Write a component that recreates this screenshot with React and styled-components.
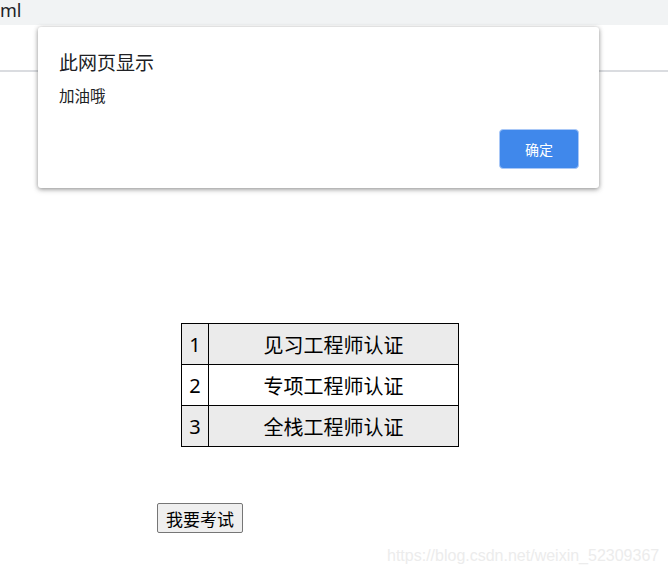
import React from 'react';
import styled, { createGlobalStyle } from 'styled-components';

const GlobalStyle = createGlobalStyle`
  html, body {
    margin: 0;
    padding: 0;
    background: #ffffff;
    font-family: 'Noto Sans', 'Noto Sans CJK SC', sans-serif;
    color: #000;
  }
`;

const Page = styled.div`
  position: relative;
  width: 668px;
  height: 576px;
  overflow: hidden;
`;

const AddressBar = styled.div`
  height: 25px;
  background: #f1f3f4;
  font-size: 18px;
  line-height: 20px;
  color: #202124;
`;

const TabStrip = styled.div`
  height: 45px;
  border-bottom: 2px solid #dadce0;
`;

const Content = styled.div`
  padding-top: 251px;
`;

const Table = styled.table`
  margin-left: 181px;
  border-collapse: collapse;
  font-family: 'Noto Sans', 'Noto Sans CJK SC', sans-serif;
  font-size: 20px;
`;

const Row = styled.tr`
  height: 41px;
  background: ${p => (p.$shaded ? '#ebebeb' : '#ffffff')};
`;

const Cell = styled.td`
  border: 1px solid #000;
  text-align: center;
  padding: 0;
  width: ${p => p.$w}px;
`;

const ExamButton = styled.button`
  margin: 56px 0 0 157px;
  width: 86px;
  height: 30px;
  font-family: 'Noto Sans CJK SC', sans-serif;
  font-size: 17px;
  background: #efefef;
  border: 1px solid #767676;
  border-radius: 2px;
  padding: 0;
  color: #000;
`;

const Watermark = styled.div`
  position: absolute;
  left: 387px;
  top: 547px;
  font-family: 'Liberation Sans', Arial, sans-serif;
  font-size: 16px;
  color: #ececec;
`;

const Dialog = styled.div`
  position: absolute;
  left: 38px;
  top: 27px;
  width: 561px;
  height: 161px;
  box-sizing: border-box;
  background: #fff;
  border-radius: 3px;
  box-shadow: 0 1px 4px rgba(0, 0, 0, 0.35), 0 2px 6px rgba(0, 0, 0, 0.15);
  padding: 22px 20px 19px 21px;
  display: flex;
  flex-direction: column;
  font-family: 'Noto Sans CJK SC', sans-serif;
`;

const DialogTitle = styled.div`
  font-size: 19px;
  line-height: 26px;
  color: #202124;
`;

const DialogMessage = styled.div`
  margin-top: 10px;
  font-size: 15.5px;
  line-height: 20px;
  color: #202124;
`;

const DialogActions = styled.div`
  margin-top: auto;
  display: flex;
  justify-content: flex-end;
`;

const OkButton = styled.button`
  width: 80px;
  height: 40px;
  border: 1px solid #a9c8f7;
  border-radius: 4px;
  background: #4088eb;
  color: #fff;
  font-family: 'Noto Sans CJK SC', sans-serif;
  font-size: 14px;
  padding: 0;
`;

const certs = ['见习工程师认证', '专项工程师认证', '全栈工程师认证'];

export default function App() {
  return (
    <Page>
      <GlobalStyle />
      <AddressBar>ml</AddressBar>
      <TabStrip />
      <Content>
        <Table>
          <tbody>
            {certs.map((name, i) => (
              <Row key={name} $shaded={i !== 1}>
                <Cell $w={26}>{i + 1}</Cell>
                <Cell $w={249}>{name}</Cell>
              </Row>
            ))}
          </tbody>
        </Table>
        <ExamButton>我要考试</ExamButton>
      </Content>
      <Watermark>https://blog.csdn.net/weixin_52309367</Watermark>
      <Dialog>
        <DialogTitle>此网页显示</DialogTitle>
        <DialogMessage>加油哦</DialogMessage>
        <DialogActions>
          <OkButton>确定</OkButton>
        </DialogActions>
      </Dialog>
    </Page>
  );
}
